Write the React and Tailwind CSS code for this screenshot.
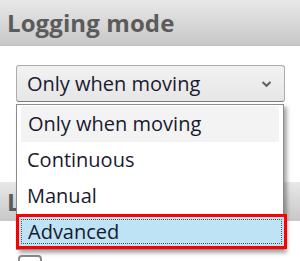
import React from "react";

export default function App() {
  return (
    <div className="relative w-[300px] h-[261px] overflow-hidden bg-white" style={{ fontFamily: '"Open Sans", "Noto Sans", sans-serif' }}>
      <div className="h-[46px] bg-gradient-to-b from-[#e8e8e8] to-[#c8c8c8] border-b border-[#c0c0c0] flex items-center pl-[7px]">
        <span className="text-[24px] leading-none font-bold text-[#5b5b5b] tracking-[0.1px] pt-[1px]">Logging mode</span>
      </div>
      <div className="pt-[19px] pl-[16px]">
        <div className="w-[269px] h-[37px] rounded-[3px] border border-[#acacac] border-b-[#7a7a7a] bg-gradient-to-b from-[#f2f2f2] to-[#e6e6e6] flex items-center justify-between pl-[10px] pr-[12px]">
          <span className="text-[20px] leading-none text-[#1a1a2e]">Only when moving</span>
          <svg width="11" height="8" viewBox="0 0 11 8"><path d="M1.5 2 L5.5 5.8 L9.5 2" fill="none" stroke="#606060" strokeWidth="2" /></svg>
        </div>
      </div>
      <div className="mt-[80px] h-[39px] bg-gradient-to-b from-[#e8e8e8] to-[#c8c8c8] flex items-center pl-[7px]">
        <span className="text-[24px] leading-none font-bold text-[#5b5b5b]">Logging</span>
      </div>
      <div className="pt-[34px] pl-[18px]">
        <div className="w-[24px] h-[24px] rounded-[4px] border-2 border-[#8a8a8a] bg-white"></div>
      </div>
      <div className="absolute left-[16px] top-[104px] w-[268px] border border-[#8c8c8c] bg-white shadow-[3px_3px_4px_rgba(0,0,0,0.35)] flex flex-col">
        <div className="h-[36px] mx-[4px] mt-[1px] bg-[#f3f3f3] flex items-center pl-[7px] text-[20px] text-[#1a1a2e]">Only when moving</div>
        <div className="h-[36px] flex items-center pl-[10px] text-[20px] text-[#1a1a2e]">Continuous</div>
        <div className="h-[36px] flex items-center pl-[10px] text-[20px] text-[#1a1a2e]">Manual</div>
        <div className="h-[35px] -mx-[1px] w-[271px] border-[3px] border-[#ff0000] bg-[#bde3f5] p-[2px]">
          <div className="h-full border border-dotted border-[#555] flex items-center pl-[6px] text-[20px] text-[#1a1a2e]">Advanced</div>
        </div>
      </div>
    </div>
  );
}
